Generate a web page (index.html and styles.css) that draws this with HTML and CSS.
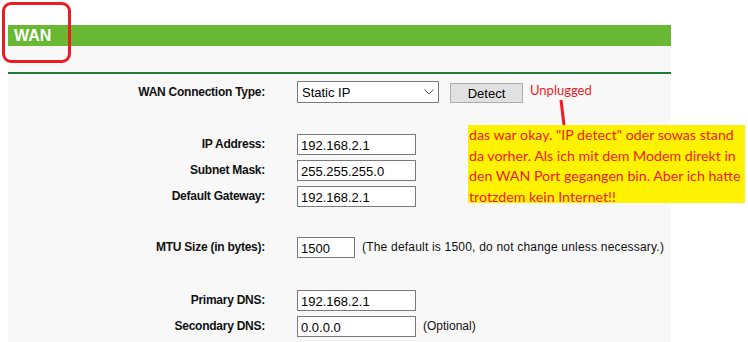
FILE: index.html
```html
<!DOCTYPE html>
<html>
	<head>
		<meta charset="UTF-8">
		<title>WAN</title>
		<link rel="stylesheet" href="styles.css">
	</head>
	<body>
		<div class="panel">
			<div class="title">WAN</div>
			<div class="subbar"></div>
			<div class="form">
				<div class="row">
					<label>WAN Connection Type:</label>
					<div class="field">
						<span class="select">
							<select>
								<option>Static IP</option>
							</select>
							<svg class="chev" width="10" height="6" viewBox="0 0 10 6"><path d="M0.5 0.5 L5 5 L9.5 0.5" fill="none" stroke="#555" stroke-width="1"/></svg>
						</span>
						<button class="btn">Detect</button>
						<span class="unplugged">Unplugged</span>
					</div>
				</div>
				<div class="gap gap1"></div>
				<div class="row">
					<label>IP Address:</label>
					<div class="field"><input class="ip" type="text" value="192.168.2.1"></div>
				</div>
				<div class="row">
					<label>Subnet Mask:</label>
					<div class="field"><input class="ip" type="text" value="255.255.255.0"></div>
				</div>
				<div class="row">
					<label>Default Gateway:</label>
					<div class="field"><input class="ip" type="text" value="192.168.2.1"></div>
				</div>
				<div class="gap gap2"></div>
				<div class="row">
					<label>MTU Size (in bytes):</label>
					<div class="field">
						<input class="mtu" type="text" value="1500">
						<span class="hint">(The default is 1500, do not change unless necessary.)</span>
					</div>
				</div>
				<div class="gap gap3"></div>
				<div class="row">
					<label>Primary DNS:</label>
					<div class="field"><input class="ip" type="text" value="192.168.2.1"></div>
				</div>
				<div class="row">
					<label>Secondary DNS:</label>
					<div class="field">
						<input class="ip" type="text" value="0.0.0.0">
						<span class="hint opt">(Optional)</span>
					</div>
				</div>
			</div>
		</div>

		<div class="mark"></div>
		<svg class="pointer" width="12" height="30" viewBox="0 0 12 30"><path d="M3 2 L6 27" stroke="#ed1c24" stroke-width="3" fill="none"/></svg>
		<div class="note">das war okay. "IP detect" oder sowas stand<br>da vorher. Als ich mit dem Modem direkt in<br>den WAN Port gegangen bin. Aber ich hatte<br>trotzdem kein Internet!!</div>
	</body>
</html>
```

FILE: styles.css
```css
* {
	padding: 0;
	margin: 0;
	box-sizing: border-box;
}
body {
	background: #fff;
	font-family: "Liberation Sans", Arial, sans-serif;
	width: 748px;
	height: 342px;
	overflow: hidden;
	position: relative;
}
.panel {
	margin: 25px 0 0 8px;
	width: 663px;
	height: 317px;
	background: #f8f8f8;
}
.title {
	height: 21px;
	background: #69b834;
	color: #fff;
	font-weight: bold;
	font-size: 16px;
	line-height: 21px;
	padding-left: 6px;
}
.subbar {
	height: 26px;
	border-bottom: 2px solid #1c7a3a;
	box-sizing: content-box;
}
.form {
	padding-top: 5px;
}
.row {
	display: grid;
	grid-template-columns: 257px auto;
	column-gap: 32px;
	align-items: center;
	height: 26px;
}
.row label {
	text-align: right;
	font-weight: bold;
	font-size: 12px;
	letter-spacing: -0.25px;
	color: #111;
}
.field {
	display: flex;
	align-items: center;
}
.gap1 { height: 26px; }
.gap2 { height: 25px; }
.gap3 { height: 27px; }
input {
	height: 21px;
	border: 1px solid #7a7a7a;
	background: #fff;
	font-family: "Liberation Sans", Arial, sans-serif;
	font-size: 13px;
	padding: 2px 0 0 3px;
	color: #000;
	outline: none;
}
input.ip { width: 119px; }
input.mtu { width: 58px; }
.select {
	position: relative;
	display: inline-block;
}
select {
	appearance: none;
	-webkit-appearance: none;
	width: 142px;
	height: 22px;
	border: 1px solid #7a7a7a;
	background: #fff;
	font-family: "Liberation Sans", Arial, sans-serif;
	font-size: 13px;
	padding: 0 0 0 4px;
	color: #000;
	display: block;
}
.chev {
	position: absolute;
	right: 5px;
	top: 8px;
}
.btn {
	margin-left: 11px;
	width: 73px;
	height: 20px;
	margin-top: 1px;
	background: #e1e1e1;
	border: 1px solid #adadad;
	font-family: "Liberation Sans", Arial, sans-serif;
	font-size: 13px;
	color: #000;
	padding-top: 2px;
}
.unplugged {
	margin-left: 7px;
	margin-top: -5px;
	font-family: Lato, "Open Sans", sans-serif;
	font-size: 13px;
	color: #ed1c24;
}
.hint {
	font-size: 12px;
	color: #111;
	margin-left: 7px;
	letter-spacing: 0.2px;
}
.hint.opt {
	margin-left: 7px;
	letter-spacing: 0;
}
.mark {
	position: absolute;
	left: 2px;
	top: 2px;
	width: 69px;
	height: 61px;
	border: 3px solid #ed1c24;
	border-radius: 9px;
}
.pointer {
	position: absolute;
	left: 558px;
	top: 98px;
}
.note {
	position: absolute;
	left: 468px;
	top: 125px;
	width: 277px;
	height: 78px;
	background: #fff200;
	color: #ed1c24;
	font-family: Lato, "Open Sans", sans-serif;
	font-size: 14.2px;
	line-height: 20.5px;
	padding: 0 0 0 1px;
	white-space: nowrap;
}
```
